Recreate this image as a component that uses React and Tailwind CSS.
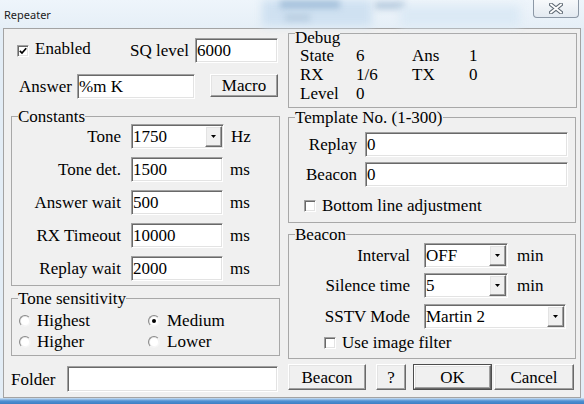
import React from "react";

const sunken =
  "border border-t-[#a0a0a0] border-l-[#a0a0a0] border-b-white border-r-white shadow-[inset_1px_1px_0_#696969,inset_-1px_-1px_0_#e3e3e3] bg-white";
const raised =
  "bg-[#f0f0f0] border border-t-white border-l-white border-b-[#696969] border-r-[#696969] shadow-[inset_-1px_-1px_0_#a0a0a0,inset_1px_1px_0_#e3e3e3]";

function TextBox({ className = "", children }) {
  return (
    <div className={`${sunken} ${className} flex items-center pl-[1px] whitespace-nowrap overflow-hidden`}>
      {children}
    </div>
  );
}

function Btn({ className = "", children }) {
  return (
    <div className={`${raised} ${className} flex items-center justify-center whitespace-nowrap`}>
      {children}
    </div>
  );
}

function Arrow() {
  return (
    <div className={`${raised} w-[17px] h-[21px] mr-[1px] flex items-center justify-center`}>
      <svg width="5" height="3" viewBox="0 0 5 3">
        <path d="M0 0h5L2.5 3z" fill="#000" />
      </svg>
    </div>
  );
}

function Select({ className = "", value }) {
  return (
    <div className={`${sunken} ${className} flex items-center`}>
      <span className="flex-1 pl-[1px] whitespace-nowrap">{value}</span>
      <Arrow />
    </div>
  );
}

function Check({ checked }) {
  return (
    <div className="w-[12px] h-[12px] border border-t-[#a0a0a0] border-l-[#a0a0a0] border-b-white border-r-white shadow-[inset_1px_1px_0_#696969,inset_-1px_-1px_0_#e3e3e3] bg-white flex items-center justify-center shrink-0">
      {checked && (
        <svg width="8" height="8" viewBox="0 0 8 8">
          <path d="M0.8 3.8 L3 6 L7.2 1.3" fill="none" stroke="#000" strokeWidth="1.7" />
        </svg>
      )}
    </div>
  );
}

function Radio({ checked }) {
  return (
    <div className="w-[12px] h-[12px] rounded-full border border-t-[#8a8a8a] border-l-[#8a8a8a] border-b-[#f4f4f4] border-r-[#f4f4f4] bg-gradient-to-br from-[#dcdcdc] to-white flex items-center justify-center shrink-0">
      <div className="w-[8px] h-[8px] rounded-full bg-white flex items-center justify-center">
        {checked && <div className="w-[4px] h-[4px] rounded-full bg-black" />}
      </div>
    </div>
  );
}

function ConstRow({ label, children, unit }) {
  return (
    <div className="flex items-center h-[25px]">
      <div className="w-[109px] text-right whitespace-nowrap">{label}</div>
      <div className="ml-[10px]">{children}</div>
      <div className="ml-[7px]">{unit}</div>
    </div>
  );
}

function BeaconRow({ label, children, unit, className = "" }) {
  return (
    <div className={`flex items-center h-[25px] ${className}`}>
      <div className="w-[121px] text-right whitespace-nowrap">{label}</div>
      <div className="ml-[14px]">{children}</div>
      {unit && <div className="ml-[9px]">{unit}</div>}
    </div>
  );
}

export default function App() {
  return (
    <div className="w-[584px] h-[404px] overflow-hidden relative bg-[#e3edf6] text-black font-['Liberation_Serif',serif] text-[17px] leading-[19px]">
      {/* Title bar */}
      <div className="h-[28px] relative bg-gradient-to-b from-[#eef5fb] to-[#e6eff7]">
        <div className="absolute left-[262px] top-[0px] w-[110px] h-[26px] bg-[#cfe1f1] blur-[4px]" />
        <div className="absolute left-[280px] top-[1px] w-[60px] h-[7px] bg-[#9fbcd8] blur-[3px]" />
        <div className="absolute left-[375px] top-[2px] w-[30px] h-[7px] bg-[#b3c8dc] blur-[3px]" />
        <div className="absolute left-[285px] top-[14px] w-[25px] h-[7px] bg-[#b8cde0] blur-[3px]" />
        <div className="absolute left-[400px] top-[6px] w-[120px] h-[20px] bg-[#dbe9f5] blur-[5px]" />
        <div className="relative pl-[4px] pt-[7px] font-['Noto_Sans',sans-serif] text-[11px] leading-[15px] text-[#1b1b1b]">
          Repeater
        </div>
        <div className="absolute left-[533px] top-0 w-[46px] h-[18px] rounded-b-[4px] border border-t-0 border-[#8c98a6] bg-gradient-to-b from-[#f7f9fb] to-[#e3eaf1] flex items-center justify-center">
          <svg width="14" height="11" viewBox="0 0 14 11">
            <path d="M2 1.5 L12 9.5 M12 1.5 L2 9.5" stroke="#5f6a75" strokeWidth="4" strokeLinecap="square" />
            <path d="M2 1.5 L12 9.5 M12 1.5 L2 9.5" stroke="#ffffff" strokeWidth="1.8" strokeLinecap="square" />
          </svg>
        </div>
      </div>

      {/* Client area */}
      <div className="ml-[3px] w-[578px] h-[370px] border border-[#a3a3a3] bg-[#f0f0f0] flex items-start">
        {/* Left column */}
        <div className="ml-[7px] w-[269px] flex flex-col">
          <div className="mt-[9px] flex items-center h-[25px]">
            <div className="w-[119px] flex items-center pl-[6px]">
              <Check checked />
              <span className="ml-[6px] relative -top-[2px]">Enabled</span>
            </div>
            <span className="whitespace-nowrap">SQ level</span>
            <TextBox className="ml-auto mr-[2px] w-[83px] h-[25px]">6000</TextBox>
          </div>
          <div className="mt-[11px] flex items-start h-[25px]">
            <div className="w-[66px] pl-[8px] h-[25px] flex items-center">Answer</div>
            <TextBox className="w-[118px] h-[25px]">%m K</TextBox>
            <Btn className="ml-[15px] w-[68px] h-[23px]">Macro</Btn>
          </div>

          <fieldset className="mt-[10px] h-[177px] w-[269px] border border-[#a8a8a8]">
            <legend className="ml-[6px] leading-[15px]">Constants</legend>
            <div className="flex flex-col gap-[8px]">
              <ConstRow label="Tone" unit="Hz">
                <Select className="w-[93px] h-[25px]" value="1750" />
              </ConstRow>
              <ConstRow label="Tone det." unit="ms">
                <TextBox className="w-[92px] h-[25px]">1500</TextBox>
              </ConstRow>
              <ConstRow label="Answer wait" unit="ms">
                <TextBox className="w-[92px] h-[25px]">500</TextBox>
              </ConstRow>
              <ConstRow label="RX Timeout" unit="ms">
                <TextBox className="w-[92px] h-[25px]">10000</TextBox>
              </ConstRow>
              <ConstRow label="Replay wait" unit="ms">
                <TextBox className="w-[92px] h-[25px]">2000</TextBox>
              </ConstRow>
            </div>
          </fieldset>

          <fieldset className="mt-[5px] h-[65px] w-[269px] border border-[#a8a8a8]">
            <legend className="ml-[6px] leading-[15px]">Tone sensitivity</legend>
            <div className="pt-[4px] pl-[7px] grid grid-cols-[129px_1fr]">
              <div className="flex items-center h-[21px]">
                <Radio />
                <span className="ml-[6px]">Highest</span>
              </div>
              <div className="flex items-center h-[21px]">
                <Radio checked />
                <span className="ml-[7px]">Medium</span>
              </div>
              <div className="flex items-center h-[21px]">
                <Radio />
                <span className="ml-[6px]">Higher</span>
              </div>
              <div className="flex items-center h-[21px]">
                <Radio />
                <span className="ml-[7px]">Lower</span>
              </div>
            </div>
          </fieldset>

          <div className="mt-[10px] flex items-center h-[26px]">
            <div className="w-[56px]">Folder</div>
            <TextBox className="w-[211px] h-[26px]"></TextBox>
          </div>
        </div>

        {/* Right column */}
        <div className="ml-[8px] w-[290px] flex flex-col">
          <fieldset className="-mt-[7px] h-[86px] w-[289px] border border-[#a8a8a8]">
            <legend className="ml-[6px] pt-[8px] leading-[15px]">Debug</legend>
            <div className="pt-[1px] pl-[11px] grid grid-cols-[56px_56px_57px_1fr]">
              <div>State</div>
              <div>6</div>
              <div>Ans</div>
              <div>1</div>
              <div>RX</div>
              <div>1/6</div>
              <div>TX</div>
              <div>0</div>
              <div>Level</div>
              <div>0</div>
            </div>
          </fieldset>

          <fieldset className="mt-[2px] h-[113px] w-[288px] border border-[#a8a8a8]">
            <legend className="ml-[6px] leading-[15px]">Template No. (1-300)</legend>
            <div className="pt-[7px] flex flex-col">
              <div className="flex items-center h-[25px]">
                <div className="w-[68px] text-right">Replay</div>
                <TextBox className="ml-[8px] w-[203px] h-[25px]">0</TextBox>
              </div>
              <div className="mt-[5px] flex items-center h-[25px]">
                <div className="w-[68px] text-right">Beacon</div>
                <TextBox className="ml-[8px] w-[203px] h-[25px]">0</TextBox>
              </div>
              <div className="mt-[9px] flex items-center h-[19px] pl-[15px]">
                <Check />
                <span className="ml-[6px]">Bottom line adjustment</span>
              </div>
            </div>
          </fieldset>

          <fieldset className="mt-[4px] h-[132px] w-[288px] border border-[#a8a8a8]">
            <legend className="ml-[6px] leading-[15px]">Beacon</legend>
            <div className="pt-[1px] flex flex-col">
              <BeaconRow label="Interval" unit="min">
                <Select className="w-[84px] h-[25px]" value="OFF" />
              </BeaconRow>
              <BeaconRow label="Silence time" unit="min" className="mt-[5px]">
                <Select className="w-[84px] h-[25px]" value="5" />
              </BeaconRow>
              <BeaconRow label="SSTV Mode" className="mt-[6px]">
                <Select className="w-[142px] h-[25px]" value="Martin 2" />
              </BeaconRow>
              <div className="mt-[4px] flex items-center h-[19px] pl-[35px]">
                <Check />
                <span className="ml-[6px]">Use image filter</span>
              </div>
            </div>
          </fieldset>

          <div className="mt-[5px] flex items-center h-[26px]">
            <Btn className="w-[78px] h-[26px]">Beacon</Btn>
            <Btn className="ml-[10px] w-[30px] h-[26px]">?</Btn>
            <div className="ml-[7px] w-[79px] h-[26px] border border-[#4d4d4d] flex">
              <Btn className="w-full h-full">OK</Btn>
            </div>
            <Btn className="ml-[2px] w-[80px] h-[26px]">Cancel</Btn>
          </div>
        </div>
      </div>

      {/* Bottom frame */}
      <div className="h-[6px] bg-gradient-to-b from-[#cfe2f3] via-[#4f91d3] to-[#3d7fc4]" />
    </div>
  );
}
